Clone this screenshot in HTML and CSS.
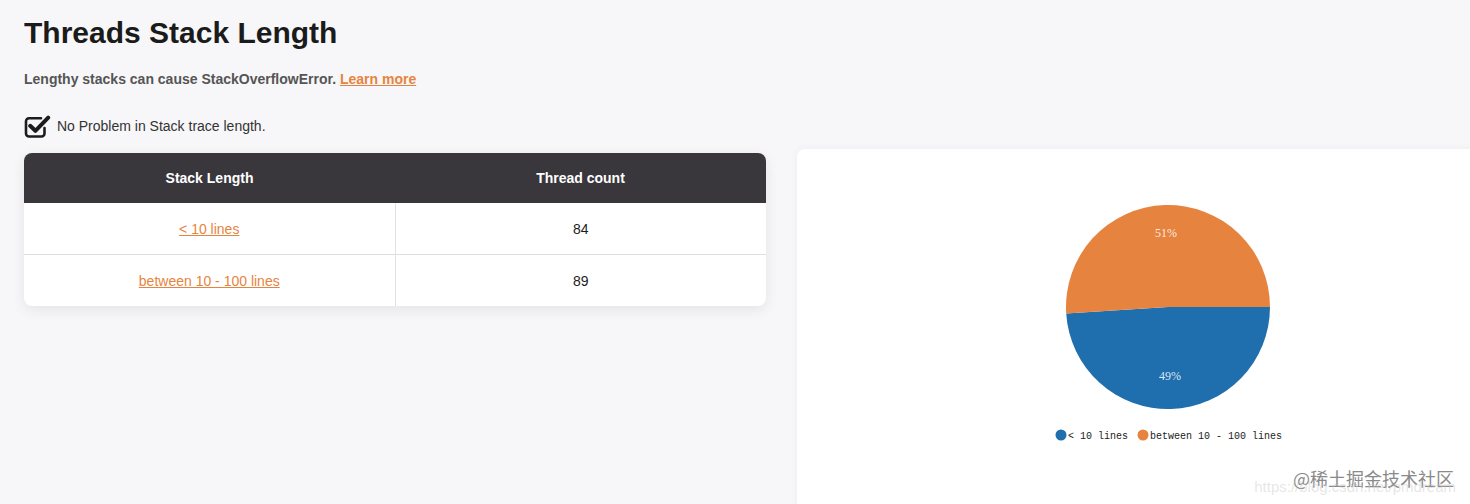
FILE: index.html
```html
<!DOCTYPE html>
<html lang="en">
<head>
<meta charset="utf-8">
<title>Threads Stack Length</title>
<link rel="stylesheet" href="styles.css">
</head>
<body>
<div class="page">
  <h1 class="title">Threads Stack Length</h1>
  <p class="subtitle">Lengthy stacks can cause StackOverflowError. <a class="link" href="#">Learn more</a></p>
  <div class="status">
    <svg class="check" width="27" height="23" viewBox="0 0 27 23">
      <path d="M17 3.2 H5 a3 3 0 0 0 -3 3 V18.5 a3 3 0 0 0 3 3 H17.5 a3 3 0 0 0 3 -3 V13" fill="none" stroke="#1c1c1c" stroke-width="2.6" stroke-linecap="round"/>
      <path d="M6.2 10.8 L11.4 15.8 L24.2 2.6" fill="none" stroke="#1c1c1c" stroke-width="4" stroke-linecap="round" stroke-linejoin="round"/>
    </svg>
    <span>No Problem in Stack trace length.</span>
  </div>
  <div class="content">
    <div class="table-card">
      <table class="table">
        <thead>
          <tr><th>Stack Length</th><th>Thread count</th></tr>
        </thead>
        <tbody>
          <tr><td><a class="cell-link" href="#">&lt; 10 lines</a></td><td>84</td></tr>
          <tr><td><a class="cell-link" href="#">between 10 - 100 lines</a></td><td>89</td></tr>
        </tbody>
      </table>
    </div>
    <div class="chart-card">
      <svg class="chart" width="700" height="360" viewBox="0 0 700 360">
        <path d="M371 158 L473 158 A102 102 0 0 1 269.2 164.4 Z" fill="#1f6ead"/>
        <path d="M371 158 L269.2 164.4 A102 102 0 1 1 473 158 Z" fill="#e6843f"/>
        <text class="pct" x="369" y="88" text-anchor="middle">51%</text>
        <text class="pct" x="373" y="231" text-anchor="middle">49%</text>
        <circle cx="264" cy="286" r="5.5" fill="#1f6ead"/>
        <text class="legend" x="271" y="289.5">&lt; 10 lines</text>
        <circle cx="346" cy="286" r="5.5" fill="#e6843f"/>
        <text class="legend" x="353" y="289.5">between 10 - 100 lines</text>
      </svg>
    </div>
  </div>
</div>
<div class="watermark">
  <span class="wm-url">https://blog.csdn.net/pmdream</span>
  <span class="wm-name">@稀土掘金技术社区</span>
</div>
</body>
</html>
```
FILE: styles.css
```css
html, body {
  margin: 0;
  padding: 0;
  background: #f7f7f9;
  overflow: hidden;
  height: 504px;
}

body {
  font-family: "Liberation Sans", Arial, sans-serif;
  color: #1c1c1c;
}

.page {
  padding: 0 0 0 24px;
}

.title {
  margin: 0;
  padding-top: 16px;
  font-size: 30px;
  font-weight: bold;
  line-height: 34px;
  color: #1b1b1b;
}

.subtitle {
  margin: 21px 0 0 0;
  font-size: 14px;
  line-height: 16px;
  font-weight: bold;
  color: #555555;
}

.link {
  color: #e6843f;
  text-decoration: underline;
}

.status {
  display: flex;
  align-items: center;
  gap: 6px;
  margin-top: 27px;
  font-size: 14px;
  color: #333;
}

.check {
  display: block;
  margin-top: 1px;
}

.content {
  display: flex;
  align-items: flex-start;
  gap: 31px;
  margin-top: 11px;
}

.table-card {
  width: 742px;
  margin-top: 4px;
  border-radius: 8px;
  background: #fff;
  box-shadow: 0 4px 14px rgba(0, 0, 0, 0.08);
  overflow: hidden;
  flex: none;
}

.table {
  width: 100%;
  border-collapse: collapse;
  font-size: 14px;
}

.table th {
  background: #3a373c;
  color: #fff;
  font-weight: bold;
  height: 50px;
  padding: 0;
  text-align: center;
  width: 50%;
}

.table td {
  height: 51px;
  padding: 0;
  text-align: center;
  color: #1c1c1c;
  border-top: 1px solid #dedede;
}

.table td + td {
  border-left: 1px solid #e2e2e2;
}

.table tbody tr:first-child td {
  border-top: none;
}

.cell-link {
  color: #e6843f;
  text-decoration: underline;
}

.chart-card {
  width: 720px;
  height: 380px;
  flex: none;
  background: #fff;
  border-radius: 8px;
  box-shadow: 0 0 8px rgba(0, 0, 0, 0.05);
}

.chart {
  display: block;
}

.pct {
  font-family: "Liberation Serif", "Times New Roman", serif;
  font-size: 12px;
  fill: #ffffff;
  fill-opacity: 0.85;
}

.legend {
  font-family: "Liberation Mono", "Courier New", monospace;
  font-size: 10px;
  fill: #222;
}

.watermark {
  position: absolute;
  right: 14px;
  bottom: 8px;
  display: flex;
  flex-direction: column;
  align-items: flex-end;
  font-family: "Noto Sans CJK SC", "Liberation Sans", sans-serif;
}

.wm-name {
  font-size: 18px;
  line-height: 20px;
  color: #8a8a8a;
  order: 1;
  margin-right: 2px;
}

.wm-url {
  font-family: "Liberation Sans", sans-serif;
  font-size: 15px;
  line-height: 18px;
  color: rgba(200, 200, 200, 0.45);
  order: 2;
  margin-top: -10px;
}
```
